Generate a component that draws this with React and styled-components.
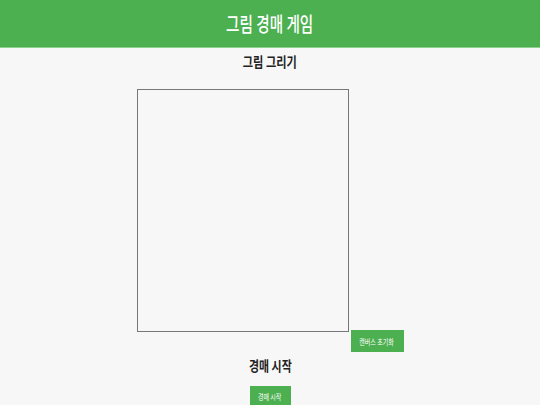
import React from 'react';
import styled, { createGlobalStyle } from 'styled-components';

const GlobalStyle = createGlobalStyle`
  html, body {
    margin: 0;
    padding: 0;
    background-color: #f7f7f7;
    font-family: "Noto Sans CJK KR", "Noto Sans", sans-serif;
  }
`;

const Header = styled.header`
  height: 47px;
  background-color: #4caf50;
  border-bottom: 1px solid #8fd18f;
  display: flex;
  justify-content: center;
  align-items: center;
`;

// the reference face is narrow, so the glyphs get squeezed horizontally
const Narrow = styled.span`
  display: inline-block;
  transform: scaleX(${(p) => p.$x || 0.78});
`;

const Title = styled.h1`
  margin: 0;
  color: white;
  font-size: 20px;
  font-weight: 500;
`;

const Section = styled.section`
  text-align: center;
`;

const SectionTitle = styled.h2`
  margin: 0;
  font-size: 14px;
  font-weight: 700;
  color: #222;
  padding: ${(p) => p.$pad || '0'};
`;

const CanvasRow = styled.div`
  display: flex;
  justify-content: center;
  align-items: flex-end;
  gap: 2px;
`;

const Canvas = styled.div`
  width: 210px;
  height: 241px;
  border: 1px solid #777;
  background-color: #f7f7f7;
`;

const Button = styled.button`
  background-color: #4caf50;
  color: white;
  border: none;
  font-family: inherit;
  font-size: 7.5px;
  width: ${(p) => p.$w};
  height: 22px;
  padding: 0;
  margin-bottom: ${(p) => p.$mb || '0'};
  cursor: pointer;
  white-space: nowrap;
`;

const App = () => {
  return (
    <>
      <GlobalStyle />
      <Header>
        <Title>
          <Narrow $x={0.73}>그림 경매 게임</Narrow>
        </Title>
      </Header>
      <Section>
        <SectionTitle $pad="3px 0 18px">
          <Narrow $x={0.8}>그림 그리기</Narrow>
        </SectionTitle>
        <CanvasRow>
          <Canvas />
          <Button $w="53px" $mb="-20px">
            <Narrow $x={0.8}>캔버스 초기화</Narrow>
          </Button>
        </CanvasRow>
      </Section>
      <Section>
        <SectionTitle $pad="23px 0 6px">
          <Narrow $x={0.78}>경매 시작</Narrow>
        </SectionTitle>
        <Button $w="41px">
          <Narrow $x={0.8}>경매 시작</Narrow>
        </Button>
      </Section>
    </>
  );
};

export default App;
